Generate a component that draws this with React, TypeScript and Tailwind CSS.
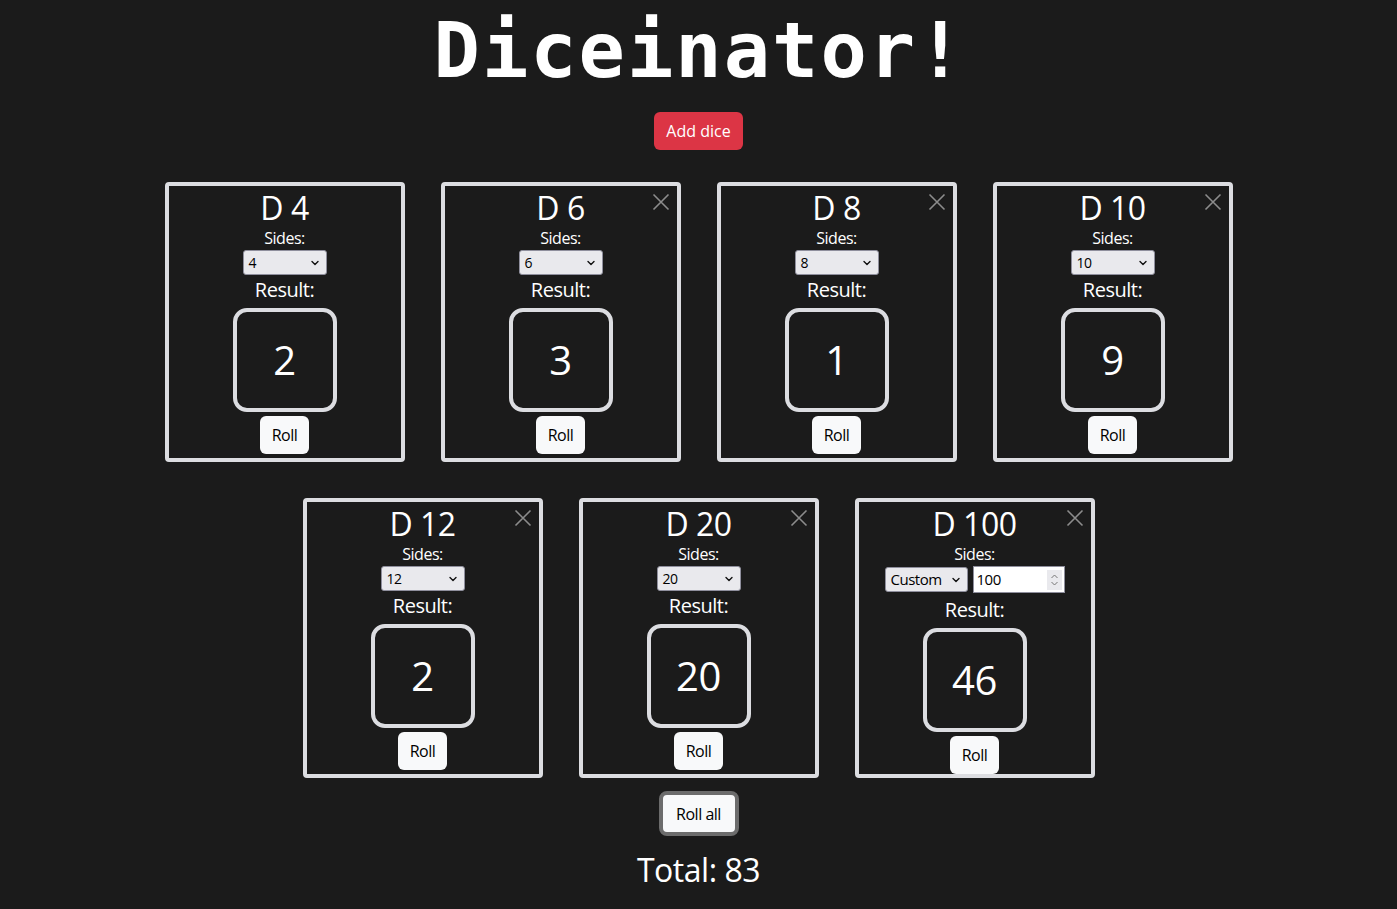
import React, { useState } from 'react';

type Die = { id: number; sides: number; custom?: boolean; result: number };

const initialDice: Die[] = [
  { id: 1, sides: 4, result: 2 },
  { id: 2, sides: 6, result: 3 },
  { id: 3, sides: 8, result: 1 },
  { id: 4, sides: 10, result: 9 },
  { id: 5, sides: 12, result: 2 },
  { id: 6, sides: 20, result: 20 },
  { id: 7, sides: 100, custom: true, result: 46 },
];

const Chevron = () => (
  <svg width="10" height="10" viewBox="0 0 10 10" className="shrink-0">
    <path d="M2 3.5 L5 6.5 L8 3.5" fill="none" stroke="#111" strokeWidth="1.4" strokeLinecap="round" strokeLinejoin="round" />
  </svg>
);

const SelectBox = ({ label, width, textSize }: { label: string; width: string; textSize: string }) => (
  <div className={`${width} ${textSize} h-[25px] flex items-center justify-between pl-[5px] pr-[6px] bg-[#e9e9ed] border border-[#8f8f9d] rounded-[3px] text-black`}>
    <span>{label}</span>
    <Chevron />
  </div>
);

const DieCard = ({ die, onRoll, onRemove, first }: { die: Die; onRoll: () => void; onRemove: () => void; first: boolean }) => (
  <div className="relative w-[240px] h-[280px] border-4 border-[#dcdde1] rounded-[4px] flex flex-col items-center pt-[3px] text-white">
    {!first && (
      <button onClick={onRemove} className="absolute top-[7px] right-[7px] w-[18px] h-[18px] flex items-center justify-center">
        <svg width="18" height="18" viewBox="0 0 18 18">
          <path d="M1.5 1.5 L16.5 16.5 M16.5 1.5 L1.5 16.5" stroke="#8c8c8c" strokeWidth="1.6" />
        </svg>
      </button>
    )}
    <div className="text-[32px] leading-[38px]">D {die.sides}</div>
    <div className="text-[16px] leading-[22px]">Sides:</div>
    {die.custom ? (
      <div className="flex items-center gap-[5px] h-[27px] mt-[1px] mb-[2px]">
        <SelectBox label="Custom" width="w-[83px]" textSize="text-[15px]" />
        <div className="w-[92px] h-[27px] bg-white border border-[#8f8f9d] flex items-center justify-between pl-[3px] pr-[2px] text-[15px] text-black">
          <span>{die.sides}</span>
          <div className="w-[15px] h-[20px] bg-[#e9e9ed] flex flex-col items-center justify-center">
            <svg width="9" height="14" viewBox="0 0 9 14">
              <path d="M1.5 5 L4.5 2 L7.5 5 M1.5 9 L4.5 12 L7.5 9" fill="none" stroke="#777" strokeWidth="1" />
            </svg>
          </div>
        </div>
      </div>
    ) : (
      <div className="mt-[1px]">
        <SelectBox label={String(die.sides)} width="w-[84px]" textSize="text-[14px]" />
      </div>
    )}
    <div className="text-[20px] leading-[24px] mt-[3px]">Result:</div>
    <div className="mt-[6px] w-[104px] h-[104px] border-4 border-[#dcdde1] rounded-[14px] flex items-center justify-center text-[40px]">
      {die.result}
    </div>
    <button
      onClick={onRoll}
      className="mt-[4px] h-[38px] px-[12px] bg-[#f8f9fa] text-black rounded-[6px] text-[16px]"
    >
      Roll
    </button>
  </div>
);

export default function App() {
  const [dice, setDice] = useState<Die[]>(initialDice);
  const roll = (d: Die) => ({ ...d, result: Math.floor(Math.random() * d.sides) + 1 });
  const total = dice.reduce((s, d) => s + d.result, 0);

  return (
    <div className="min-h-screen bg-[#1b1b1b] text-white flex flex-col items-center tracking-[-0.03em]" style={{ fontFamily: '"Open Sans", "Noto Sans", sans-serif' }}>
      <h1 className="mt-[5px] text-[77px] leading-[92px] font-bold tracking-[2px] pl-[2px]" style={{ fontFamily: '"DejaVu Sans Mono", monospace' }}>
        Diceinator!
      </h1>
      <button
        onClick={() => setDice([...dice, { id: Date.now(), sides: 6, result: 1 }])}
        className="mt-[15px] h-[38px] px-[12px] bg-[#dc3545] text-white rounded-[6px] text-[16px] tracking-normal"
      >
        Add dice
      </button>
      <div className="mt-[32px] w-[1068px] flex flex-wrap justify-center gap-x-[36px] gap-y-[36px]">
        {dice.map((d, i) => (
          <DieCard
            key={d.id}
            die={d}
            first={i === 0}
            onRoll={() => setDice(dice.map((x) => (x.id === d.id ? roll(x) : x)))}
            onRemove={() => setDice(dice.filter((x) => x.id !== d.id))}
          />
        ))}
      </div>
      <button
        onClick={() => setDice(dice.map(roll))}
        className="mt-[13px] h-[45px] w-[80px] border-4 border-[#6c6c6c] bg-[#f8f9fa] text-black rounded-[8px] text-[16px]"
      >
        Roll all
      </button>
      <div className="mt-[14px] text-[32px] leading-[40px]">Total: {total}</div>
    </div>
  );
}
